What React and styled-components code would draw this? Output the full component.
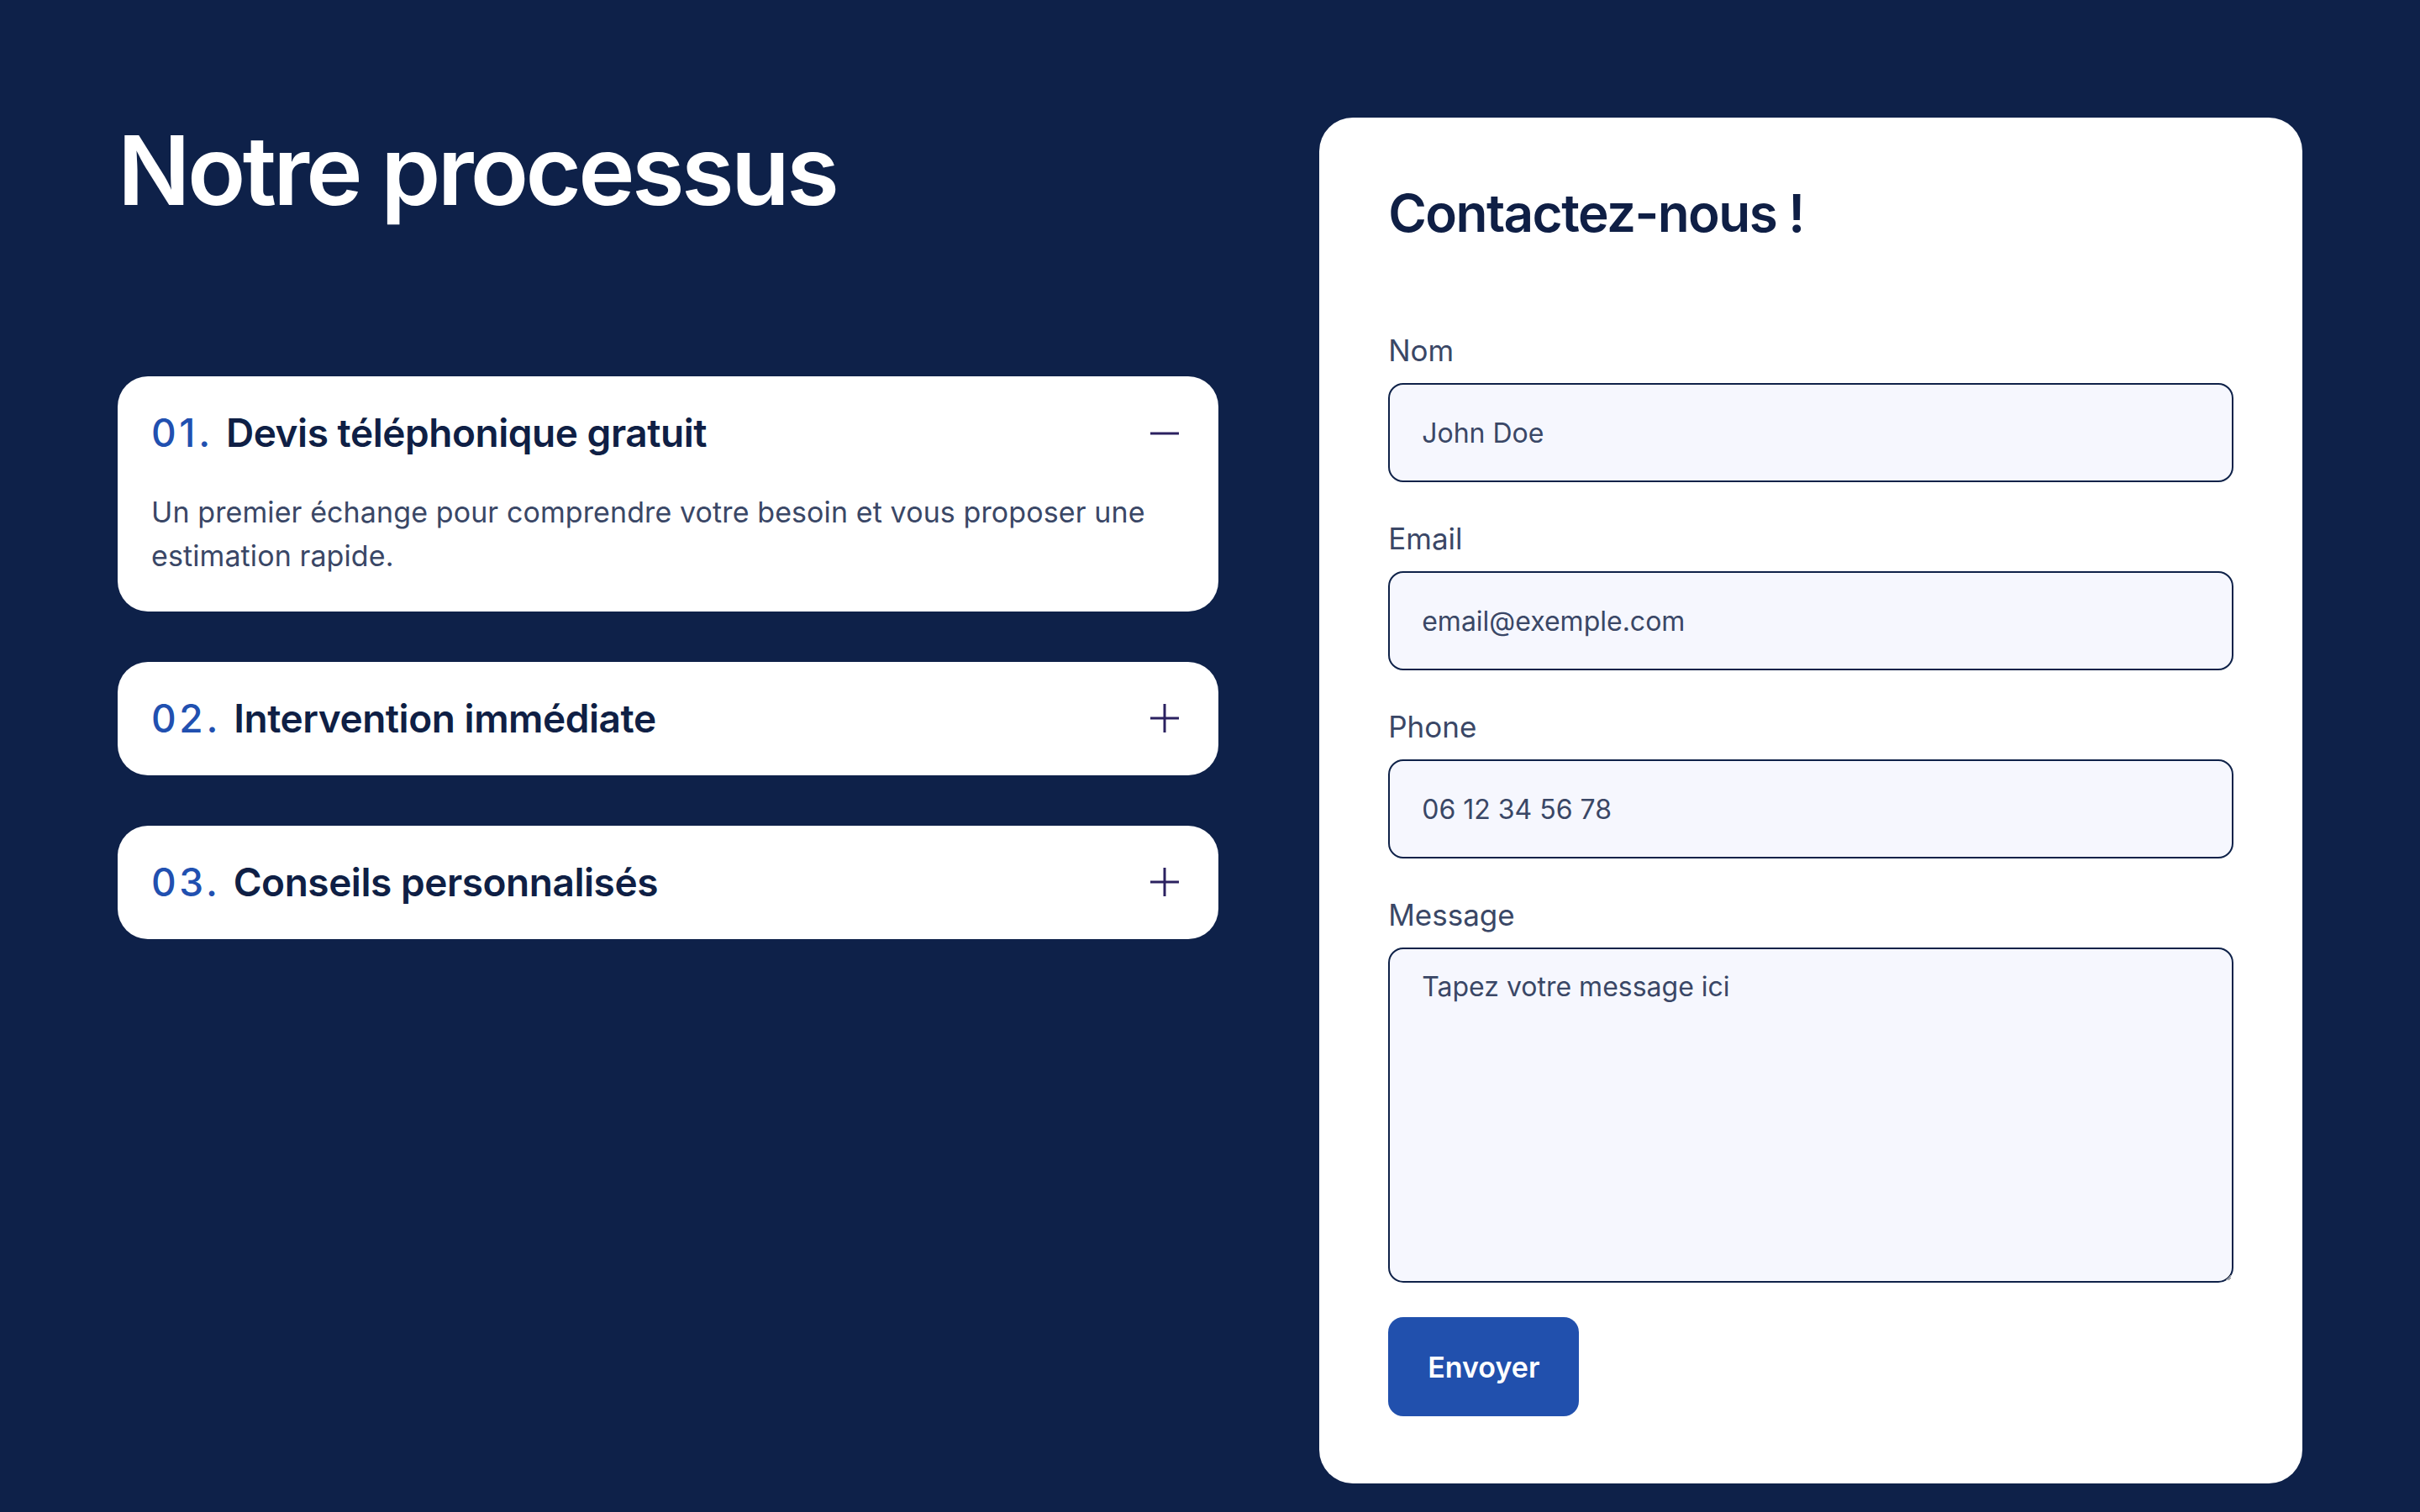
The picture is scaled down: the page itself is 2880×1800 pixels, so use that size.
import React, { useState } from 'react'
import styled, { createGlobalStyle } from 'styled-components'

const GlobalStyle = createGlobalStyle`
  * { box-sizing: border-box; }
  body {
    margin: 0;
    background: #0e2149;
    font-family: Inter, "Noto Sans", sans-serif;
  }
`

const Page = styled.main`
  min-height: 100vh;
  padding: 140px 140px 36px;
  display: grid;
  grid-template-columns: 1.12fr 1fr;
  gap: 120px;
  align-items: start;
`

const Left = styled.section`
  display: flex;
  flex-direction: column;
`

const Heading = styled.h1`
  margin: 0 0 183px;
  font-size: 114px;
  line-height: 1.1;
  font-weight: 600;
  letter-spacing: -0.032em;
  color: #ffffff;
`

const Steps = styled.div`
  display: flex;
  flex-direction: column;
  gap: 60px;
`

const Step = styled.div`
  background: #ffffff;
  border-radius: 36px;
  padding: 40px 46px 40px 40px;
`

const StepHead = styled.button`
  width: 100%;
  display: flex;
  align-items: center;
  justify-content: space-between;
  background: none;
  border: none;
  padding: 0;
  cursor: pointer;
  font-family: inherit;
  text-align: left;
`

const StepTitle = styled.span`
  font-size: 46px;
  line-height: 1.2;
  font-weight: 600;
  letter-spacing: -0.01em;
  color: #0f1f45;
`

const StepNum = styled.span`
  color: #2150b0;
  font-weight: 500;
  letter-spacing: 0.08em;
  margin-right: 4px;
`

const StepText = styled.p`
  margin: 40px 0 0;
  font-size: 34px;
  line-height: 52px;
  letter-spacing: 0.003em;
  color: #3a4766;
`

const Toggle = styled.svg`
  flex: none;
  width: 36px;
  height: 36px;
`

const Card = styled.section`
  background: #ffffff;
  border-radius: 40px;
  padding: 80px 82px;
`

const CardTitle = styled.h2`
  margin: 0 0 104px;
  font-size: 62px;
  line-height: 1.1;
  font-weight: 600;
  letter-spacing: -0.025em;
  color: #0f1f45;
`

const Form = styled.form`
  display: flex;
  flex-direction: column;
  gap: 42px;
`

const Field = styled.div`
  display: flex;
  flex-direction: column;
`

const Label = styled.label`
  font-size: 35px;
  line-height: 51px;
  color: #3a4766;
  margin-bottom: 13px;
`

const Input = styled.input`
  height: 118px;
  padding: 0 38px;
  border: 2px solid #0f2249;
  border-radius: 18px;
  background: #f6f7fe;
  font-family: inherit;
  font-size: 32px;
  color: #3a4766;
  outline: none;

  &::placeholder { color: #3a4766; opacity: 1; }
`

const TextArea = styled.textarea`
  height: 399px;
  padding: 26px 38px;
  border: 2px solid #0f2249;
  border-radius: 18px;
  background: #f6f7fe;
  font-family: inherit;
  font-size: 32px;
  line-height: 1.21;
  color: #3a4766;
  outline: none;

  &::placeholder { color: #3a4766; opacity: 1; }
`

const Submit = styled.button`
  align-self: flex-start;
  margin-top: -1px;
  height: 118px;
  padding: 0 47px;
  border: none;
  border-radius: 18px;
  background: #2150ad;
  color: #ffffff;
  font-family: inherit;
  font-size: 34px;
  font-weight: 600;
  cursor: pointer;
`

const steps = [
  {
    num: '01.',
    title: 'Devis téléphonique gratuit',
    text: 'Un premier échange pour comprendre votre besoin et vous proposer une estimation rapide.',
  },
  {
    num: '02.',
    title: 'Intervention immédiate',
    text: 'Un technicien se déplace rapidement pour sécuriser et réparer votre installation.',
  },
  {
    num: '03.',
    title: 'Conseils personnalisés',
    text: 'Des recommandations adaptées pour éviter les problèmes à l’avenir.',
  },
]

const ToggleIcon = ({ open }) => (
  <Toggle viewBox="0 0 36 36" fill="none" stroke="#2b2160" strokeWidth="3">
    <path d="M1 18h34" />
    {!open && <path d="M18 1v34" />}
  </Toggle>
)

const fields = [
  { id: 'nom', label: 'Nom', placeholder: 'John Doe', type: 'text' },
  { id: 'email', label: 'Email', placeholder: 'email@exemple.com', type: 'email' },
  { id: 'phone', label: 'Phone', placeholder: '06 12 34 56 78', type: 'tel' },
]

export default function App() {
  const [open, setOpen] = useState(0)

  return (
    <>
      <GlobalStyle />
      <Page>
        <Left>
          <Heading>Notre processus</Heading>
          <Steps>
            {steps.map((s, i) => (
              <Step key={s.num}>
                <StepHead type="button" onClick={() => setOpen(open === i ? -1 : i)}>
                  <StepTitle>
                    <StepNum>{s.num}</StepNum> {s.title}
                  </StepTitle>
                  <ToggleIcon open={open === i} />
                </StepHead>
                {open === i && <StepText>{s.text}</StepText>}
              </Step>
            ))}
          </Steps>
        </Left>

        <Card>
          <CardTitle>Contactez-nous !</CardTitle>
          <Form onSubmit={e => e.preventDefault()}>
            {fields.map(f => (
              <Field key={f.id}>
                <Label htmlFor={f.id}>{f.label}</Label>
                <Input id={f.id} type={f.type} placeholder={f.placeholder} />
              </Field>
            ))}
            <Field>
              <Label htmlFor="message">Message</Label>
              <TextArea id="message" placeholder="Tapez votre message ici" />
            </Field>
            <Submit type="submit">Envoyer</Submit>
          </Form>
        </Card>
      </Page>
    </>
  )
}
